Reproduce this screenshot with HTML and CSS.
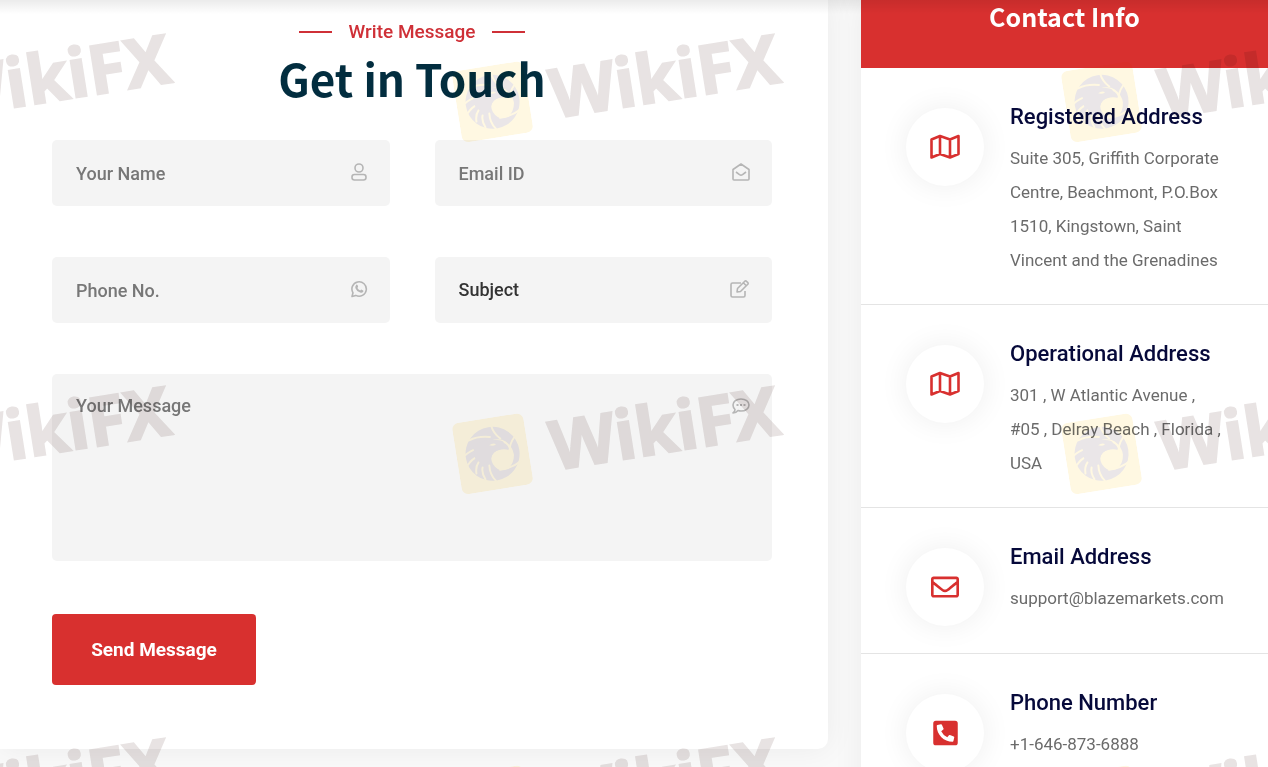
FILE: index.html
```
<!DOCTYPE html>
<html lang="en">
<head>
    <meta charset="UTF-8">
    <meta name="viewport" content="width=device-width, initial-scale=1.0">
    <title>Contact Us</title>
    <link rel="stylesheet" href="styles.css">
</head>
<body>
    <!-- shared symbols -->
    <svg class="sprite" aria-hidden="true">
        <symbol id="eagle" viewBox="0 0 72 72">
            <rect width="72" height="72" rx="7" fill="#ffd24a"/>
            <circle cx="36" cy="36" r="27" fill="#7a6670"/>
            <!-- opening under the beak -->
            <path fill="#ffd24a" d="M27 25q9-5 16-1 4 1 5 4 4 3 5 7-3-2-8-2-9 0-11 7-1 7 5 12 5 3 10 1 7-4 8-13 0-8-6-14-7-7-24-1z"/>
            <g fill="none" stroke="#ffd24a" stroke-width="2" stroke-linecap="round">
                <path d="M39 8q1 8 7 14M15 19q9-3 21 0M60 23q-7 7-7 16M62 48q-8 5-21 5M35 63q-5-7-4-16M9 33q6-4 11-4M10 43q5-5 9-6M17 53q0-7 4-11M25 60q-3-7-1-12"/>
            </g>
            <path fill="#7a6670" d="M18 26q12-7 24-3 6 1 7 4 4 3 4 7-4-2-9-1-9 1-11 9l-8 4-7-8z"/>
            <path fill="#ffd24a" d="M34 27q4-2 7 0-3 2-7 0z"/>
        </symbol>
        <symbol id="map" viewBox="0 0 30 26">
            <path fill="none" stroke="currentColor" stroke-width="2.6" stroke-linejoin="round" d="M1.5 5.5 10 2l10 3.500 8.500-3.500v18L20 23.500 10 20l-8.500 3.500zM10 2v18M20 5.500v18"/>
        </symbol>
    </svg>

    <div class="top-shadow"></div>

    <main class="contact">
        <section class="form-card">
            <p class="sub-title">Write Message</p>
            <h2>Get in Touch</h2>
            <form class="contact-form">
                <div class="form-group">
                    <input type="text" name="name" placeholder="Your Name" aria-label="Your Name">
                    <svg class="field-icon" viewBox="0 0 18 18"><circle cx="9" cy="5" r="4"/><rect x="2" y="11.500" width="14" height="5.500" rx="2.500"/></svg>
                </div>
                <div class="form-group">
                    <input type="email" name="email" placeholder="Email ID" aria-label="Email ID">
                    <svg class="field-icon" viewBox="0 0 18 18"><path d="M1 6.500 9 1l8 5.500V16q0 1-1 1H2q-1 0-1-1zM4 9l3.500 2.600q1.500 1 3 0L14 9"/></svg>
                </div>
                <div class="form-group">
                    <input type="tel" name="phone" placeholder="Phone No." aria-label="Phone No.">
                    <svg class="field-icon" viewBox="0 0 18 18"><path d="M2 16.500 3 12.800A7.200 7.200 0 1 1 5.800 15.400z"/><path class="solid" d="M6.300 4.800q.8-.5 1.200.3l.6 1.500q.1.500-.7 1.300 1 1.800 2.800 2.600l1-1 2 1q.5.400 0 1.300-1 1.400-3 .8-3.600-1.200-4.900-4.700-.2-1.900 1-3.100z"/></svg>
                </div>
                <div class="form-group">
                    <select name="subject" aria-label="Subject">
                        <option>Subject</option>
                    </select>
                    <svg class="field-icon wide" viewBox="0 0 20 18"><path d="M11 3H2.500Q1 3 1 4.500v11Q1 17 2.500 17h11q1.500 0 1.500-1.500V11M7 12l.5-3.500 7.300-7.300q.8-.7 1.600 0l1.400 1.400q.7.800 0 1.600L10.500 11.500zM13.300 2.700l3 3"/></svg>
                </div>
                <div class="form-group full">
                    <textarea name="message" placeholder="Your Message" aria-label="Your Message"></textarea>
                    <svg class="field-icon" viewBox="0 0 18 18"><path d="M1 16q2-1.500 2-3.500-2-2-2-4.500C1 4.500 4.500 2 9 2s8 2.500 8 6-3.500 6-8 6q-1.500 0-3-.5Q4 16 1 16z"/><path class="solid" d="M4.500 7h2v2h-2zM8 7h2v2H8zM11.500 7h2v2h-2z"/></svg>
                </div>
                <button type="submit">Send Message</button>
            </form>
        </section>

        <aside class="info-card">
            <h3>Contact Info</h3>
            <div class="info-item">
                <div class="info-icon"><svg width="30" height="26"><use href="#map"/></svg></div>
                <div class="info-text">
                    <h4>Registered Address</h4>
                    <p>Suite 305, Griffith Corporate Centre, Beachmont, P.O.Box 1510, Kingstown, Saint Vincent and the Grenadines</p>
                </div>
            </div>
            <div class="info-item">
                <div class="info-icon"><svg width="30" height="26"><use href="#map"/></svg></div>
                <div class="info-text">
                    <h4>Operational Address</h4>
                    <p>301 , W Atlantic Avenue , #05 , Delray Beach , Florida , USA</p>
                </div>
            </div>
            <div class="info-item">
                <div class="info-icon"><svg width="28" height="28" viewBox="0 0 512 512"><path fill="currentColor" d="M464 64H48C21.490 64 0 85.490 0 112v288c0 26.510 21.490 48 48 48h416c26.510 0 48-21.490 48-48V112c0-26.510-21.490-48-48-48zm0 48v40.805c-22.422 18.259-58.168 46.651-134.587 106.490-16.841 13.247-50.201 45.072-73.413 44.701-23.208.375-56.579-31.459-73.413-44.701C106.180 199.465 70.425 171.067 48 152.805V112h416zM48 400V214.398c22.914 18.251 55.409 43.862 104.938 82.646 21.857 17.205 60.134 55.186 103.062 54.955 42.717.231 80.509-37.199 103.053-54.947 49.528-38.783 82.032-64.401 104.947-82.653V400H48z"/></svg></div>
                <div class="info-text">
                    <h4>Email Address</h4>
                    <p>support@blazemarkets.com</p>
                </div>
            </div>
            <div class="info-item">
                <div class="info-icon"><svg width="25" height="28" viewBox="0 0 448 512"><path fill="currentColor" d="M400 32H48A48 48 0 0 0 0 80v352a48 48 0 0 0 48 48h352a48 48 0 0 0 48-48V80a48 48 0 0 0-48-48zm-16.390 307.370l-15 65A15 15 0 0 1 354 416C194 416 64 286.290 64 126a15.700 15.700 0 0 1 11.630-14.610l65-15A18.230 18.230 0 0 1 144 96a16.270 16.270 0 0 1 13.790 9.090l30 70A17.900 17.900 0 0 1 189 181a17 17 0 0 1-5.500 11.610l-37.890 31a231.910 231.910 0 0 0 110.780 110.780l31-37.890A17 17 0 0 1 299 291a17.850 17.850 0 0 1 5.910 1.210l70 30A16.250 16.250 0 0 1 384 336a17.410 17.410 0 0 1-.390 3.370z"/></svg></div>
                <div class="info-text">
                    <h4>Phone Number</h4>
                    <p>+1-646-873-6888</p>
                </div>
            </div>
        </aside>
    </main>

    <div class="watermarks" aria-hidden="true">
        <div class="mark"><svg><use href="#eagle"/></svg><span>WikiFX</span></div>
        <div class="mark"><svg><use href="#eagle"/></svg><span>WikiFX</span></div>
        <div class="mark"><svg><use href="#eagle"/></svg><span>WikiFX</span></div>
        <div class="mark"><svg><use href="#eagle"/></svg><span>WikiFX</span></div>
        <div class="mark"><svg><use href="#eagle"/></svg><span>WikiFX</span></div>
        <div class="mark"><svg><use href="#eagle"/></svg><span>WikiFX</span></div>
        <div class="mark"><svg><use href="#eagle"/></svg><span>WikiFX</span></div>
        <div class="mark"><svg><use href="#eagle"/></svg><span>WikiFX</span></div>
        <div class="mark"><svg><use href="#eagle"/></svg><span>WikiFX</span></div>
    </div>
</body>
</html>
```
FILE: styles.css
```
* {
    box-sizing: border-box;
}
body {
    position: relative;
    height: 100vh;
    margin: 0;
    overflow: hidden;
    background: #f9f9f9;
    font-family: Roboto, sans-serif;
    color: #6b6b6b;
}
h2, h3, h4, p {
    margin: 0;
}
.sprite {
    position: absolute;
    width: 0;
    height: 0;
}
.top-shadow {
    position: absolute;
    top: 0;
    left: 0;
    right: 0;
    height: 14px;
    background: linear-gradient(rgba(0, 0, 0, 0.08), rgba(0, 0, 0, 0));
    z-index: 2;
}
.contact {
    display: flex;
    align-items: flex-start;
    gap: 33px;
}

/* form */
.form-card {
    flex: 1;
    padding: 20px 56px 64px 52px;
    background: #fff;
    border-radius: 0 0 10px 0;
    box-shadow: 0 0 30px rgba(0, 0, 0, 0.06);
}
.sub-title {
    display: flex;
    align-items: center;
    justify-content: center;
    gap: 17px;
    font-size: 19px;
    font-weight: 500;
    line-height: 24px;
    color: #cf3037;
}
.sub-title::before,
.sub-title::after {
    content: "";
    width: 33px;
    height: 2px;
    background: #cf3037;
}
.form-card h2 {
    margin-bottom: 28px;
    font-family: "Noto Sans CJK SC", sans-serif;
    font-size: 44px;
    font-weight: 700;
    line-height: 68px;
    text-align: center;
    color: #022d3f;
}
.contact-form {
    display: grid;
    grid-template-columns: 1fr 1fr;
    gap: 51px 45px;
}
.form-group {
    position: relative;
}
.full {
    grid-column: 1 / -1;
}
input,
select,
textarea {
    display: block;
    width: 100%;
    height: 66px;
    padding: 0 60px 0 24px;
    border: none;
    border-radius: 5px;
    background: #f4f4f4;
    font-family: inherit;
    font-size: 18px;
    font-weight: 500;
    line-height: 24px;
    color: #333;
    appearance: none;
}
textarea {
    height: 187px;
    padding-top: 20px;
    resize: none;
}
::placeholder {
    color: #777;
    opacity: 1;
}
.field-icon {
    position: absolute;
    top: 23px;
    right: 22px;
    width: 18px;
    height: 18px;
    fill: none;
    stroke: #b5b5b5;
    stroke-width: 1.6px;
    stroke-linejoin: round;
}
.field-icon.wide {
    width: 20px;
}
.field-icon .solid {
    fill: #b5b5b5;
    stroke: none;
}
button {
    justify-self: start;
    width: 204px;
    height: 71px;
    margin-top: 2px;
    border: none;
    border-radius: 4px;
    background: #d8302f;
    font-family: inherit;
    font-size: 19px;
    font-weight: 700;
    color: #fff;
    cursor: pointer;
}

/* contact info */
.info-card {
    width: 407px;
    background: #fff;
    box-shadow: 0 0 30px rgba(0, 0, 0, 0.06);
}
.info-card h3 {
    height: 68px;
    background: #d8302f;
    font-family: "Noto Sans CJK SC", sans-serif;
    font-size: 25px;
    font-weight: 700;
    line-height: 32px;
    text-align: center;
    color: #fff;
}
.info-item {
    display: flex;
    gap: 26px;
    min-height: 146px;
    padding: 34px 42px 27px 45px;
    border-bottom: 1px solid #e4e4e4;
}
.info-icon {
    display: flex;
    flex: none;
    align-items: center;
    justify-content: center;
    width: 78px;
    height: 78px;
    margin-top: 6px;
    border-radius: 50%;
    box-shadow: 0 0 30px rgba(0, 0, 0, 0.07);
    color: #d8302f;
}
.info-text h4 {
    margin-bottom: 9px;
    font-size: 22px;
    font-weight: 500;
    line-height: 30px;
    color: #06093a;
}
.info-text p {
    font-size: 17px;
    line-height: 34px;
}

/* watermark tiles laid over the page */
.watermarks {
    position: absolute;
    top: -94px;
    left: -296px;
    display: grid;
    grid-template-columns: repeat(3, 609px);
    grid-auto-rows: 352px;
    place-items: center;
    pointer-events: none;
    mix-blend-mode: multiply;
    z-index: 3;
}
.mark {
    display: flex;
    align-items: center;
    gap: 22px;
    transform: rotate(-9deg);
    opacity: 0.16;
}
.mark svg {
    width: 72px;
    height: 72px;
}
.mark span {
    font-family: "Noto Sans", sans-serif;
    font-size: 68px;
    font-weight: 700;
    line-height: 72px;
    color: #705350;
    -webkit-text-stroke: 2px #705350;
}
```
